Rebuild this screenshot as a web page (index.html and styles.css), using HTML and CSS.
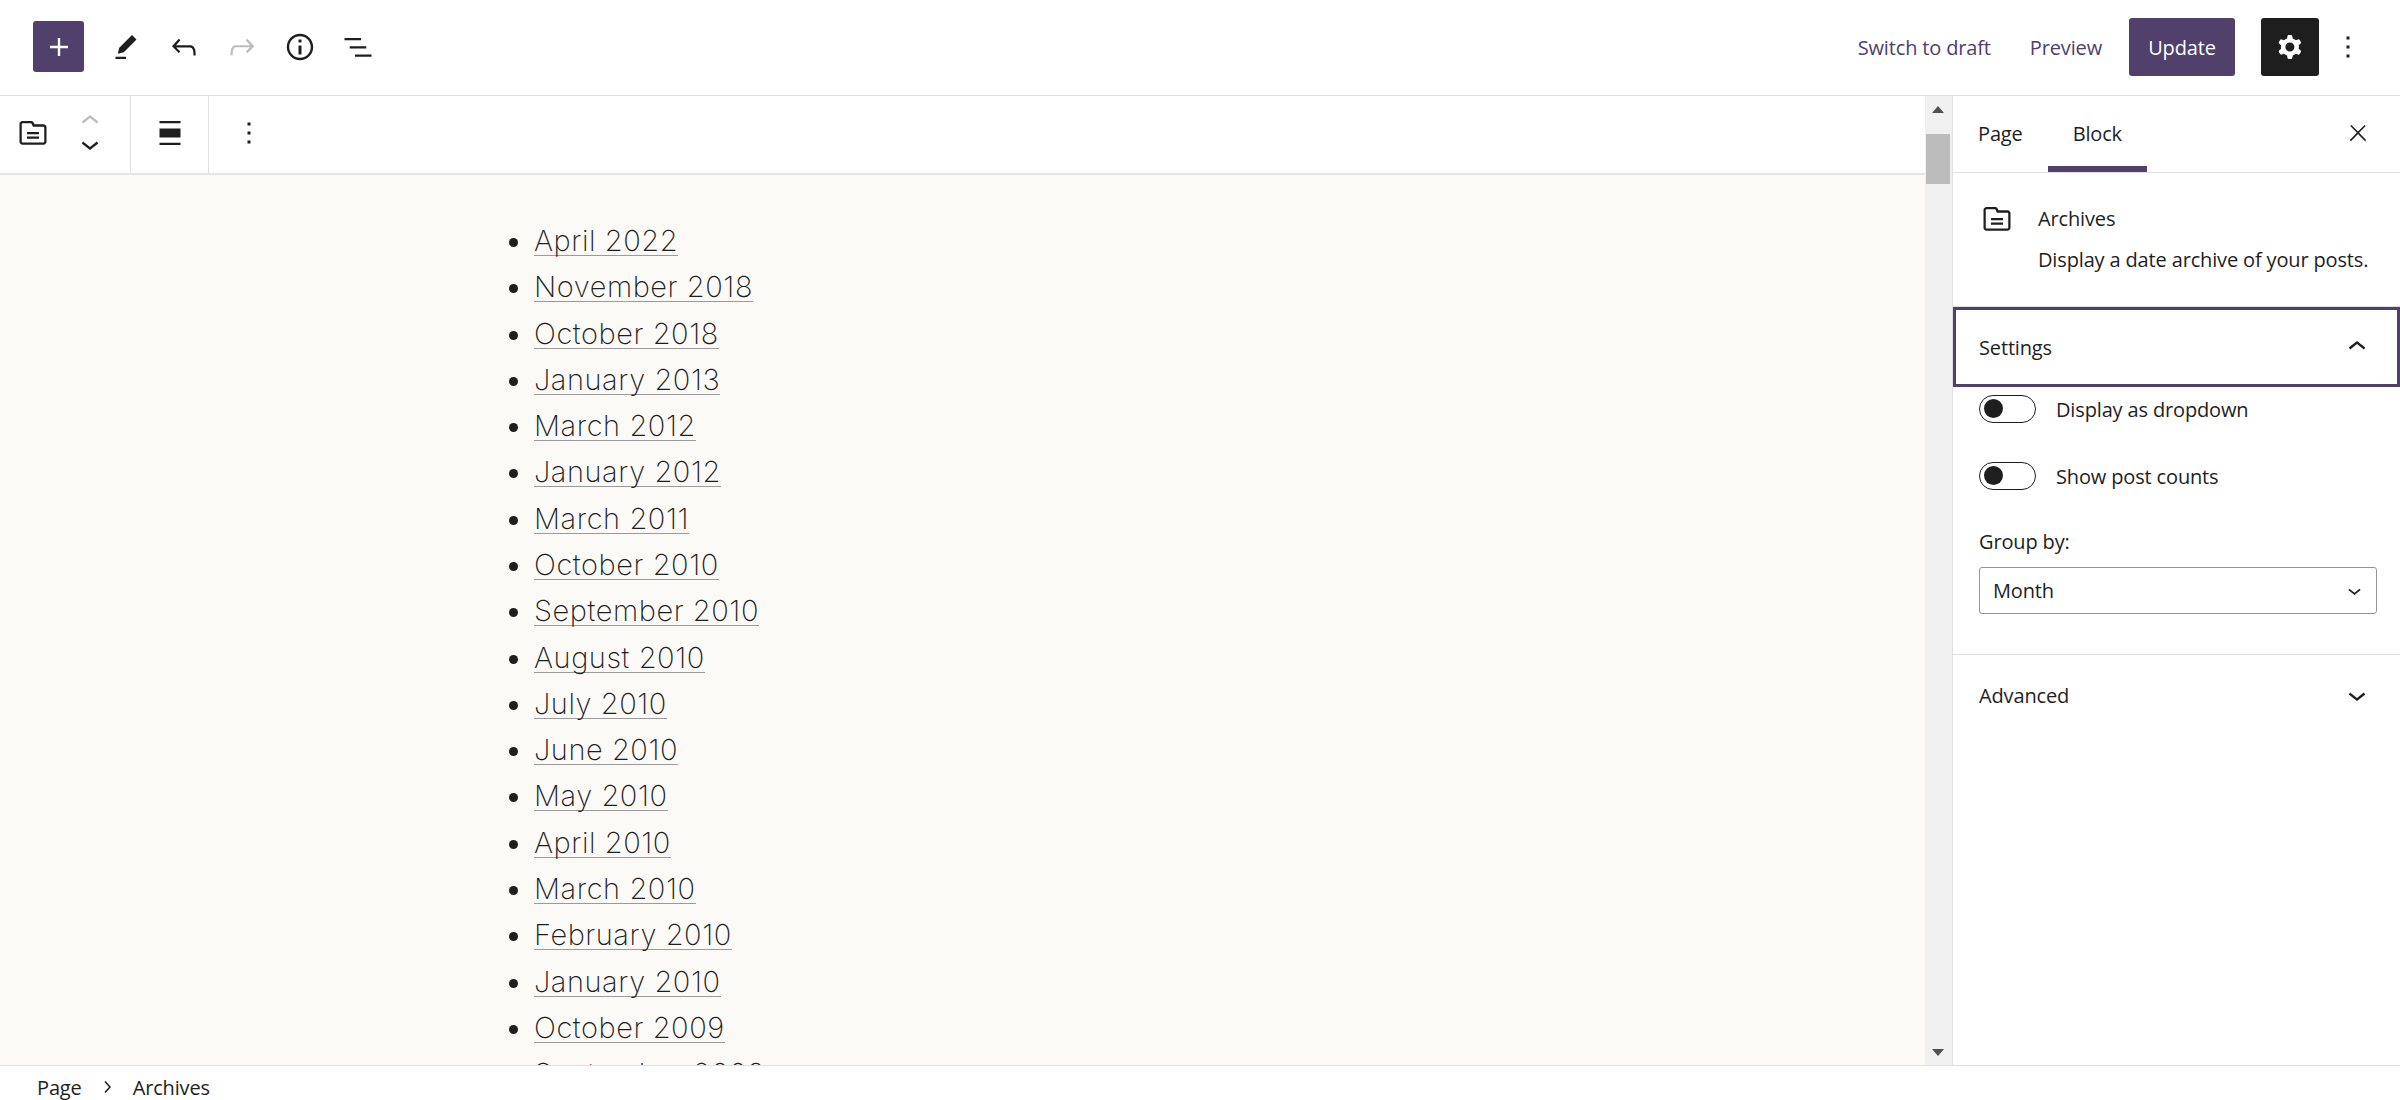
FILE: index.html
```html
<!DOCTYPE html>
<html lang="en">
<head>
    <meta charset="UTF-8">
    <title>Edit Page</title>
    <link rel="stylesheet" href="styles.css">
</head>
<body>
    <header class="topbar">
        <div class="topbar-left">
            <button class="inserter"><svg class="icon" viewBox="0 0 24 24"><path d="M18 11.2h-5.2V6h-1.6v5.2H6v1.6h5.2V18h1.6v-5.2H18z"/></svg></button>
            <svg class="icon" viewBox="0 0 24 24"><path d="m19 7-3-3-8.5 8.5-1 4 4-1L19 7Zm-7 11.5H5V20h7v-1.5Z"/></svg>
            <svg class="icon" viewBox="0 0 24 24"><path d="M18.3 11.7c-.6-.6-1.4-.9-2.3-.9H6.7l2.9-3.3-1.1-1-4.5 5L8.5 16l1-1-2.7-2.7H16c.5 0 .9.2 1.3.5 1 1 1 3.4 1 4.5v.3h1.5v-.2c0-1.5 0-4.3-1.5-5.7z"/></svg>
            <svg class="icon disabled" viewBox="0 0 24 24"><path d="M15.6 6.5l-1.1 1 2.9 3.3H8c-.9 0-1.7.3-2.3.9-1.4 1.5-1.4 4.2-1.4 5.6v.2h1.5v-.3c0-1.1 0-3.5 1-4.5.3-.3.7-.5 1.3-.5h9.2L14.5 15l1.1 1.1 4.6-4.6-4.6-5z"/></svg>
            <svg class="icon" viewBox="0 0 24 24"><path d="M12 3.2c-4.8 0-8.8 3.9-8.8 8.8 0 4.8 3.9 8.8 8.8 8.8 4.8 0 8.8-3.9 8.8-8.8 0-4.8-4-8.8-8.8-8.8zm0 16c-4 0-7.2-3.3-7.2-7.2C4.8 8 8 4.8 12 4.8s7.2 3.3 7.2 7.2c0 4-3.2 7.2-7.2 7.2zM11 17h2v-6h-2v6zm0-8h2V7h-2v2z"/></svg>
            <svg class="icon" viewBox="0 0 24 24"><path d="M3 6h11v1.5H3V6Zm3.5 5.5h11V13h-11v-1.5ZM21 17H10v1.5h11V17Z"/></svg>
        </div>
        <div class="topbar-right">
            <a class="link-btn draft">Switch to draft</a>
            <a class="link-btn preview">Preview</a>
            <button class="update">Update</button>
            <button class="settings-btn"><svg class="icon" viewBox="0 0 24 24"><path fill-rule="evenodd" d="M10.289 4.836A1 1 0 0 1 11.275 4h1.306a1 1 0 0 1 .987.836l.244 1.466c.787.26 1.503.679 2.108 1.218l1.393-.522a1 1 0 0 1 1.216.437l.653 1.13a1 1 0 0 1-.23 1.273l-1.148.944a6.025 6.025 0 0 1 0 2.435l1.149.946a1 1 0 0 1 .23 1.272l-.653 1.13a1 1 0 0 1-1.216.437l-1.394-.522c-.605.54-1.32.958-2.108 1.218l-.244 1.466a1 1 0 0 1-.987.836h-1.306a1 1 0 0 1-.986-.836l-.244-1.466a5.995 5.995 0 0 1-2.108-1.218l-1.394.522a1 1 0 0 1-1.217-.436l-.653-1.131a1 1 0 0 1 .23-1.272l1.149-.946a6.026 6.026 0 0 1 0-2.435l-1.148-.944a1 1 0 0 1-.23-1.272l.653-1.131a1 1 0 0 1 1.217-.437l1.393.522a5.994 5.994 0 0 1 2.108-1.218l.244-1.466ZM14.929 12a3 3 0 1 1-6 0 3 3 0 0 1 6 0Z"/></svg></button>
            <svg class="icon" viewBox="0 0 24 24"><path d="M13 19h-2v-2h2v2zm0-6h-2v-2h2v2zm0-6h-2V5h2v2z"/></svg>
        </div>
    </header>

    <div class="workspace">
        <main class="editor">
            <div class="block-toolbar">
                <div class="tool-group group-block">
                    <svg class="icon" viewBox="0 0 24 24"><path d="M19 6.2h-5.9l-.6-1.1c-.3-.7-1-1.1-1.8-1.1H5c-1.1 0-2 .9-2 2v11.8c0 1.1.9 2 2 2h14c1.1 0 2-.9 2-2V8.2c0-1.1-.9-2-2-2zm.5 11.6c0 .3-.2.5-.5.5H5c-.3 0-.5-.2-.5-.5V6c0-.3.2-.5.5-.5h5.6c.2 0 .4.1.4.3l1 2H19c.3 0 .5.2.5.5v9.5zM8 12.8h8v-1.5H8v1.5zm0 3h8v-1.5H8v1.5z"/></svg>
                    <div class="mover">
                        <svg class="icon disabled" viewBox="0 0 24 24"><path d="M6.5 12.4L12 8l5.5 4.4-.9 1.2L12 10l-4.5 3.6-1-1.2z"/></svg>
                        <svg class="icon" viewBox="0 0 24 24"><path d="M17.5 11.6L12 16l-5.5-4.4.9-1.2L12 14l4.5-3.6 1 1.2z"/></svg>
                    </div>
                </div>
                <div class="tool-group group-align">
                    <svg class="icon" viewBox="0 0 24 24"><path d="M5 5.5h14V4H5v1.5ZM5 20h14v-1.5H5V20Zm0-11h14v6H5V9Z"/></svg>
                </div>
                <div class="tool-group group-more">
                    <svg class="icon" viewBox="0 0 24 24"><path d="M13 19h-2v-2h2v2zm0-6h-2v-2h2v2zm0-6h-2V5h2v2z"/></svg>
                </div>
            </div>
            <div class="canvas">
                <ul class="archives">
                    <li><a>April 2022</a></li>
                    <li><a>November 2018</a></li>
                    <li><a>October 2018</a></li>
                    <li><a>January 2013</a></li>
                    <li><a>March 2012</a></li>
                    <li><a>January 2012</a></li>
                    <li><a>March 2011</a></li>
                    <li><a>October 2010</a></li>
                    <li><a>September 2010</a></li>
                    <li><a>August 2010</a></li>
                    <li><a>July 2010</a></li>
                    <li><a>June 2010</a></li>
                    <li><a>May 2010</a></li>
                    <li><a>April 2010</a></li>
                    <li><a>March 2010</a></li>
                    <li><a>February 2010</a></li>
                    <li><a>January 2010</a></li>
                    <li><a>October 2009</a></li>
                    <li><a>September 2009</a></li>
                </ul>
            </div>
        </main>

        <div class="scrollbar">
            <svg class="scroll-arrow" viewBox="0 0 14 8"><path d="M7 0l6 7H1z"/></svg>
            <div class="scroll-thumb"></div>
            <svg class="scroll-arrow down" viewBox="0 0 14 8"><path d="M7 8L1 1h12z"/></svg>
        </div>

        <aside class="sidebar">
            <div class="tabs">
                <span class="tab">Page</span>
                <span class="tab active">Block</span>
                <svg class="icon close" viewBox="0 0 24 24"><path d="M13 11.8l6.1-6.3-1-1-6.1 6.2-6.1-6.2-1 1 6.1 6.3-6.5 6.7 1 1 6.5-6.6 6.5 6.6 1-1z"/></svg>
            </div>
            <div class="block-card">
                <svg class="icon" viewBox="0 0 24 24"><path d="M19 6.2h-5.9l-.6-1.1c-.3-.7-1-1.1-1.8-1.1H5c-1.1 0-2 .9-2 2v11.8c0 1.1.9 2 2 2h14c1.1 0 2-.9 2-2V8.2c0-1.1-.9-2-2-2zm.5 11.6c0 .3-.2.5-.5.5H5c-.3 0-.5-.2-.5-.5V6c0-.3.2-.5.5-.5h5.6c.2 0 .4.1.4.3l1 2H19c.3 0 .5.2.5.5v9.5zM8 12.8h8v-1.5H8v1.5zm0 3h8v-1.5H8v1.5z"/></svg>
                <div>
                    <div class="card-title">Archives</div>
                    <div class="card-desc">Display a date archive of your posts.</div>
                </div>
            </div>
            <div class="panel-head focused">
                <span>Settings</span>
                <svg class="icon" viewBox="0 0 24 24"><path d="M6.5 12.4L12 8l5.5 4.4-.9 1.2L12 10l-4.5 3.6-1-1.2z"/></svg>
            </div>
            <div class="panel-body">
                <div class="toggle-row"><span class="toggle"></span><span>Display as dropdown</span></div>
                <div class="toggle-row"><span class="toggle"></span><span>Show post counts</span></div>
                <div class="field-label">Group by:</div>
                <div class="select">
                    <span>Month</span>
                    <svg class="select-caret" viewBox="0 0 24 24"><path d="M17.5 11.6L12 16l-5.5-4.4.9-1.2L12 14l4.5-3.6 1 1.2z"/></svg>
                </div>
            </div>
            <div class="panel-head">
                <span>Advanced</span>
                <svg class="icon" viewBox="0 0 24 24"><path d="M17.5 11.6L12 16l-5.5-4.4.9-1.2L12 14l4.5-3.6 1 1.2z"/></svg>
            </div>
        </aside>
    </div>

    <footer class="breadcrumb">
        <span>Page</span>
        <svg class="crumb-sep" viewBox="0 0 24 24"><path d="M10.6 6L9.4 7l4.6 5-4.6 5 1.2 1 5.4-6z"/></svg>
        <span>Archives</span>
    </footer>
</body>
</html>
```

FILE: styles.css
```css
* {
    box-sizing: border-box;
}
html, body {
    height: 100%;
}
body {
    margin: 0;
    display: flex;
    flex-direction: column;
    height: 1100px;
    overflow: hidden;
    background: #fff;
    color: #1e1e1e;
    font-family: "Open Sans", "Noto Sans", sans-serif;
    font-size: 20px;
    letter-spacing: -0.15px;
}
button {
    border: 0;
    padding: 0;
    font: inherit;
    letter-spacing: inherit;
}
.icon {
    display: block;
    width: 36px;
    height: 36px;
    flex: none;
    fill: #1e1e1e;
}
.icon.disabled {
    fill: #bdbdbd;
}

/* top bar */
.topbar {
    flex: none;
    height: 96px;
    display: flex;
    justify-content: space-between;
    align-items: center;
    border-bottom: 1px solid #e0e0e0;
    padding: 0 34px 2px 33px;
}
.topbar-left, .topbar-right {
    display: flex;
    align-items: center;
}
.topbar-left {
    gap: 22px;
}
.inserter {
    width: 51px;
    height: 51px;
    margin-right: 2px;
    display: flex;
    align-items: center;
    justify-content: center;
    background: #50406b;
    border-radius: 3px;
}
.inserter .icon {
    fill: #fff;
}
.link-btn {
    color: #50406b;
    padding-top: 2px;
}
.draft {
    margin-right: 39px;
}
.preview {
    margin-right: 27px;
}
.update {
    width: 106px;
    height: 58px;
    margin-right: 26px;
    padding-top: 2px;
    background: #50406b;
    color: #fff;
    border-radius: 3px;
}
.settings-btn {
    width: 58px;
    height: 58px;
    margin-right: 11px;
    display: flex;
    align-items: center;
    justify-content: center;
    background: #1e1e1e;
    border-radius: 3px;
}
.settings-btn .icon {
    fill: #fff;
}

/* editor */
.workspace {
    flex: 1;
    min-height: 0;
    display: flex;
}
.editor {
    flex: 1;
    min-width: 0;
    display: flex;
    flex-direction: column;
}
.block-toolbar {
    flex: none;
    height: 79px;
    display: flex;
    border-bottom: 2px solid #e6e6e6;
}
.tool-group {
    display: flex;
    align-items: center;
    padding-bottom: 4px;
    border-right: 1px solid #e0e0e0;
}
.group-block {
    width: 131px;
    padding-left: 15px;
    gap: 21px;
}
.group-align {
    width: 78px;
    justify-content: center;
}
.group-more {
    width: 79px;
    justify-content: center;
    border-right: 0;
}
.mover {
    display: flex;
    flex-direction: column;
    align-items: center;
    height: 62px;
    margin-top: 3px;
}
.mover .icon {
    margin-bottom: -13px;
}
.canvas {
    flex: 1;
    min-height: 0;
    overflow: hidden;
    background: #fbfaf7;
}
.archives {
    margin: 0;
    padding: 43px 0 0 534px;
    list-style: disc;
    font-family: Inter, "Liberation Sans", sans-serif;
    font-size: 29px;
    font-weight: 200;
    letter-spacing: 0.55px;
    line-height: 46.28px;
}
.archives a {
    display: inline-block;
    line-height: 28px;
    color: #1e1e1e;
    border-bottom: 1px solid #9a9a9a;
}

/* scrollbar */
.scrollbar {
    flex: none;
    width: 28px;
    display: flex;
    flex-direction: column;
    align-items: center;
    background: #f0f0f0;
    border-right: 1px solid #e0e0e0;
    padding: 10px 2px 0 0;
}
.scroll-arrow {
    display: block;
    width: 14px;
    height: 8px;
    flex: none;
    fill: #505050;
}
.scroll-arrow.down {
    margin-top: auto;
    margin-bottom: 9px;
}
.scroll-thumb {
    width: 24px;
    height: 50px;
    margin-top: 20px;
    background: #bcbcbc;
}

/* sidebar */
.sidebar {
    flex: none;
    width: 447px;
    display: flex;
    flex-direction: column;
}
.tabs {
    flex: none;
    height: 77px;
    display: flex;
    align-items: stretch;
    border-bottom: 1px solid #e0e0e0;
    padding: 0 29px 0 0;
}
.tab {
    display: flex;
    align-items: center;
    padding: 4px 25px 0;
    height: 76px;
    border-bottom: 6px solid transparent;
    color: #1e1e1e;
}
.tab.active {
    border-bottom-color: #50406b;
}
.close {
    margin-left: auto;
    margin-top: 24px;
    width: 26px;
    height: 26px;
}
.block-card {
    flex: none;
    height: 134px;
    display: flex;
    gap: 23px;
    padding: 28px 0 0 26px;
    border-bottom: 1px solid #e0e0e0;
}
.card-title {
    line-height: 30px;
    font-weight: 500;
    margin-top: 3px;
}
.card-desc {
    line-height: 30px;
    margin-top: 11px;
}
.panel-head {
    flex: none;
    display: flex;
    align-items: center;
    justify-content: space-between;
    height: 80px;
    padding: 0 25px 0 26px;
    font-weight: 500;
}
.panel-head.focused {
    border: 3px solid #50406b;
    padding-left: 23px;
    padding-right: 22px;
}
.panel-body {
    flex: none;
    padding: 8px 24px 0 26px;
    height: 268px;
    border-bottom: 1px solid #e0e0e0;
}
.toggle-row {
    display: flex;
    align-items: center;
    gap: 20px;
    height: 28px;
    margin-bottom: 39px;
}
.toggle {
    flex: none;
    position: relative;
    width: 57px;
    height: 28px;
    border: 1.5px solid #1e1e1e;
    border-radius: 14px;
}
.toggle::after {
    content: "";
    position: absolute;
    left: 3.5px;
    top: 3px;
    width: 19px;
    height: 19px;
    border-radius: 50%;
    background: #1e1e1e;
}
.field-label {
    line-height: 30px;
    margin-top: -2px;
    margin-bottom: 10px;
}
.select {
    display: flex;
    align-items: center;
    justify-content: space-between;
    height: 47px;
    width: 398px;
    padding: 0 8px 0 13px;
    border: 1.5px solid #949494;
    border-radius: 3px;
}
.select-caret {
    width: 27px;
    height: 27px;
    fill: #1e1e1e;
}

/* breadcrumb */
.breadcrumb {
    flex: none;
    height: 35px;
    display: flex;
    align-items: center;
    padding: 8px 0 0 37px;
    border-top: 1px solid #e0e0e0;
    background: #fff;
}
.crumb-sep {
    width: 24px;
    height: 24px;
    margin: 0 14px 0 13px;
    fill: #1e1e1e;
}
```
